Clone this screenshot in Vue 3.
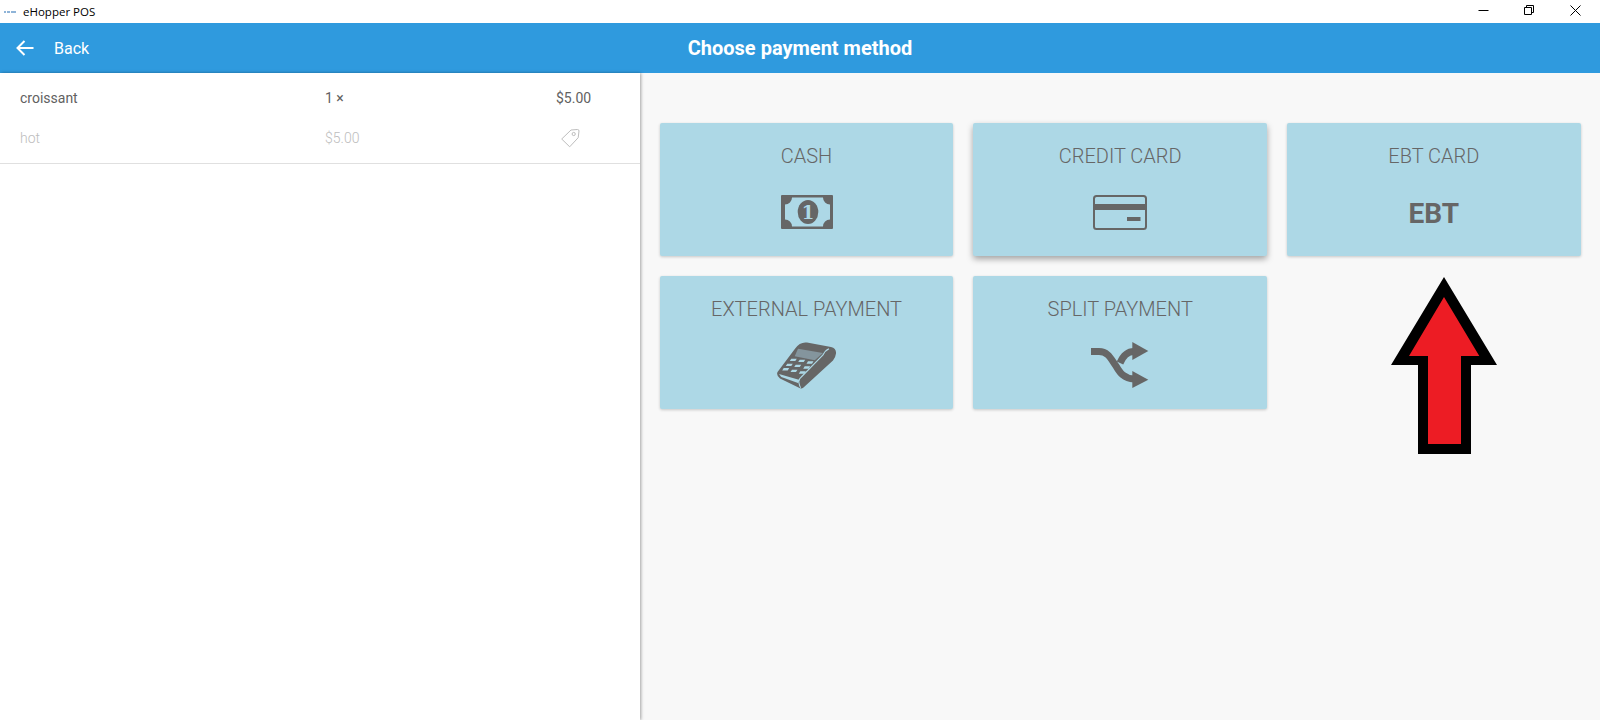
<script setup>
const cards = [
  { title: 'CASH', type: 'cash' },
  { title: 'CREDIT CARD', type: 'credit', raised: true },
  { title: 'EBT CARD', type: 'ebt' },
  { title: 'EXTERNAL PAYMENT', type: 'terminal' },
  { title: 'SPLIT PAYMENT', type: 'split' }
]
const keys = [
  [14.3, 16.7], [22.7, 17.7], [31, 19.3],
  [10.3, 21.7], [18.7, 22.7], [27.7, 24.3],
  [6.7, 26], [15, 27.7], [23.3, 29.3]
]
const keypad = keys.map(([x, y]) => `M${x} ${y}h5.5l-1.5 2.4h-5.500z`).join('')
</script>

<template>
  <div class="window">
    <div class="titlebar">
      <div class="appname">
        <svg class="logo" width="12" height="4" viewBox="0 0 12 4">
          <rect x="0" y="1" width="12" height="2" fill="#8fb4d8" />
          <rect x="2" y="1" width="1" height="2" fill="#fff" />
          <rect x="6" y="1" width="1" height="2" fill="#fff" />
        </svg>
        <span>eHopper POS</span>
      </div>
      <div class="winbtns">
        <svg width="11" height="11" viewBox="0 0 11 11"><path d="M0.5 5.500H10.500" stroke="#000" fill="none" /></svg>
        <svg width="11" height="11" viewBox="0 0 11 11"><path d="M0.5 2.500H7.500V9.500H0.5ZM2.500 2.500V0.5H9.500V7.500H7.500" stroke="#000" fill="none" /></svg>
        <svg width="11" height="11" viewBox="0 0 11 11"><path d="M0.5 0.5L10.500 10.500M10.500 0.5L0.5 10.500" stroke="#000" fill="none" /></svg>
      </div>
    </div>

    <header class="topbar">
      <div class="back">
        <svg width="18" height="16" viewBox="0 0 18 16">
          <path d="M8.500 1L1.500 8L8.500 15M1.500 8H17.500" stroke="#fff" stroke-width="2" fill="none" />
        </svg>
        <span>Back</span>
      </div>
      <h1>Choose payment method</h1>
    </header>

    <main class="main">
      <aside class="order">
        <div class="order-item">
          <div class="row">
            <span>croissant</span>
            <span>1 <small>×</small></span>
            <span>$5.00</span>
          </div>
          <div class="row muted">
            <span>hot</span>
            <span>$5.00</span>
            <svg class="tag" width="19" height="19" viewBox="0 0 19 19">
              <path d="M10 1L16.500 0.5Q18 0.5 18 2L17.200 8.700L8.700 17.800L0.7 10Z" stroke="#bdbdbd" stroke-width="1" fill="none" />
              <circle cx="12.700" cy="5" r="1.600" stroke="#bdbdbd" fill="none" />
            </svg>
          </div>
        </div>
      </aside>

      <section class="methods">
        <div v-for="c in cards" :key="c.title" class="card" :class="{ raised: c.raised }">
          <div class="card-title">{{ c.title }}</div>
          <div class="card-icon">
            <svg v-if="c.type === 'cash'" class="cash-icon" width="52" height="34" viewBox="0 0 52 34">
              <rect width="52" height="34" rx="1" fill="#666" />
              <path d="M11 2.500H42A7 7 0 0 0 49 9.500V24.500A7 7 0 0 0 42 31.500H11A7 7 0 0 0 4 24.500V9.500A7 7 0 0 0 11 2.500Z" fill="#add8e6" />
              <ellipse cx="27" cy="17" rx="10.300" ry="12" fill="#666" />
              <text x="27" y="23.500" text-anchor="middle" class="one">1</text>
            </svg>
            <svg v-else-if="c.type === 'credit'" width="54" height="35" viewBox="0 0 54 35">
              <rect x="1" y="1" width="52" height="33" rx="2.500" fill="none" stroke="#666" stroke-width="2" />
              <rect x="1" y="9" width="52" height="6" fill="#666" />
              <rect x="34" y="22" width="13.500" height="4" fill="#666" />
            </svg>
            <span v-else-if="c.type === 'ebt'" class="ebt">EBT</span>
            <svg v-else-if="c.type === 'terminal'" width="60" height="47" viewBox="0 0 60 47">
              <path d="M30 0.5L54 5Q59.500 6.500 59 11.500Q58.500 15.500 56 18.500L26.500 45.500Q24.500 47 22.500 46L3 36.500Q-1 33.500 0.5 30L18 6.700Q23 -0.5 30 0.5Z" fill="#666" />
              <path d="M21 6.700L46 11L37.700 18.300L17.700 14.300Z" fill="#84959d" />
              <path d="M52 6.700Q48 8.500 46 13L24.300 35Q21 38 22 41Q22.500 44 23.700 45.700" stroke="#add8e6" stroke-width="1.100" fill="none" />
              <path d="M2 32L22.700 38L21 41L4.300 35Z" fill="#add8e6" />
              <path :d="keypad" fill="#add8e6" />
            </svg>
            <svg v-else-if="c.type === 'split'" width="58" height="47" viewBox="0 0 58 47">
              <path d="M0 9.500H8C17 9.500 20 17 25 24C29 31 33 36.500 43 37" stroke="#666" stroke-width="7" fill="none" />
              <path d="M29 21C32 14 36 9.500 43 9.500" stroke="#666" stroke-width="7" fill="none" />
              <path d="M41.300 0L57.300 9L41.300 18Z" fill="#666" />
              <path d="M41.300 29L57.300 37.700L41.300 46Z" fill="#666" />
            </svg>
          </div>
        </div>
      </section>

      <svg class="pointer" width="108" height="179" viewBox="0 0 108 179">
        <path d="M54 1L107 89H81V178H28V89H1Z" fill="#000" />
        <path d="M54 21L89.300 80H71V168H38V80H19Z" fill="#ed1c24" />
      </svg>
    </main>
  </div>
</template>

<style scoped>
.window {
  width: 1600px;
  height: 720px;
  display: flex;
  flex-direction: column;
  overflow: hidden;
  background: #fff;
  font-family: Roboto, "Liberation Sans", sans-serif;
}
.titlebar {
  height: 23px;
  display: flex;
  justify-content: space-between;
  align-items: center;
  background: #fff;
}
.appname {
  display: flex;
  align-items: center;
  gap: 7px;
  padding-left: 4px;
  font-family: "Open Sans", "Liberation Sans", sans-serif;
  font-size: 11.5px;
  color: #000;
}
.logo {
  display: block;
}
.winbtns {
  display: flex;
  gap: 35px;
  padding: 0 19px 2px 0;
}
.winbtns svg {
  display: block;
}
.topbar {
  height: 50px;
  background: #2f9ade;
  display: grid;
  grid-template-columns: 1fr auto 1fr;
  align-items: center;
  color: #fff;
}
.back {
  display: flex;
  align-items: center;
  gap: 20px;
  padding-left: 16px;
  font-size: 16px;
}
.topbar h1 {
  margin: 0;
  font-size: 20px;
  font-weight: 700;
}
.main {
  position: relative;
  flex: 1;
  display: flex;
  min-height: 0;
  background: #f8f8f8;
}
.order {
  width: 640px;
  flex: none;
  background: #fff;
  box-shadow: 1px 0 3px rgba(0, 0, 0, 0.35);
}
.order-item {
  height: 91px;
  box-sizing: border-box;
  padding: 5px 20px 0;
  border-bottom: 1px solid #e0e0e0;
}
.row {
  height: 40px;
  display: grid;
  grid-template-columns: 305px 231px 1fr;
  align-items: center;
  font-size: 14px;
  color: #616161;
}
.row small {
  font-size: 14px;
}
.muted {
  color: #bdbdbd;
  font-weight: 300;
}
.tag {
  display: block;
  margin-left: 5px;
}
.methods {
  flex: 1;
  padding: 50px 19.3px 0 19.7px;
  display: grid;
  grid-template-columns: repeat(3, 1fr);
  grid-auto-rows: 133px;
  gap: 20px;
  align-content: start;
}
.card {
  background: #add8e6;
  border-radius: 2px;
  box-shadow: 0 1px 3px rgba(0, 0, 0, 0.2);
  display: flex;
  flex-direction: column;
  align-items: center;
  color: #666;
}
.card.raised {
  box-shadow: 0 3px 6px rgba(0, 0, 0, 0.35);
}
.card-title {
  margin-top: 21px;
  font-size: 20px;
  line-height: 24px;
  font-weight: 300;
}
.card-icon {
  height: 47px;
  margin-top: 21px;
  display: flex;
  align-items: center;
  justify-content: center;
}
.card-icon svg {
  display: block;
}
.card-icon .cash-icon {
  margin-bottom: 1px;
}
.ebt {
  padding-top: 2px;
  font-size: 28px;
  font-weight: 700;
  color: #666;
}
.one {
  font-family: "DejaVu Serif", serif;
  font-size: 18px;
  font-weight: 700;
  fill: #add8e6;
}
.pointer {
  position: absolute;
  left: 1390px;
  top: 203px;
}
</style>

<style>
html, body {
  margin: 0;
  background: #fff;
}
</style>
